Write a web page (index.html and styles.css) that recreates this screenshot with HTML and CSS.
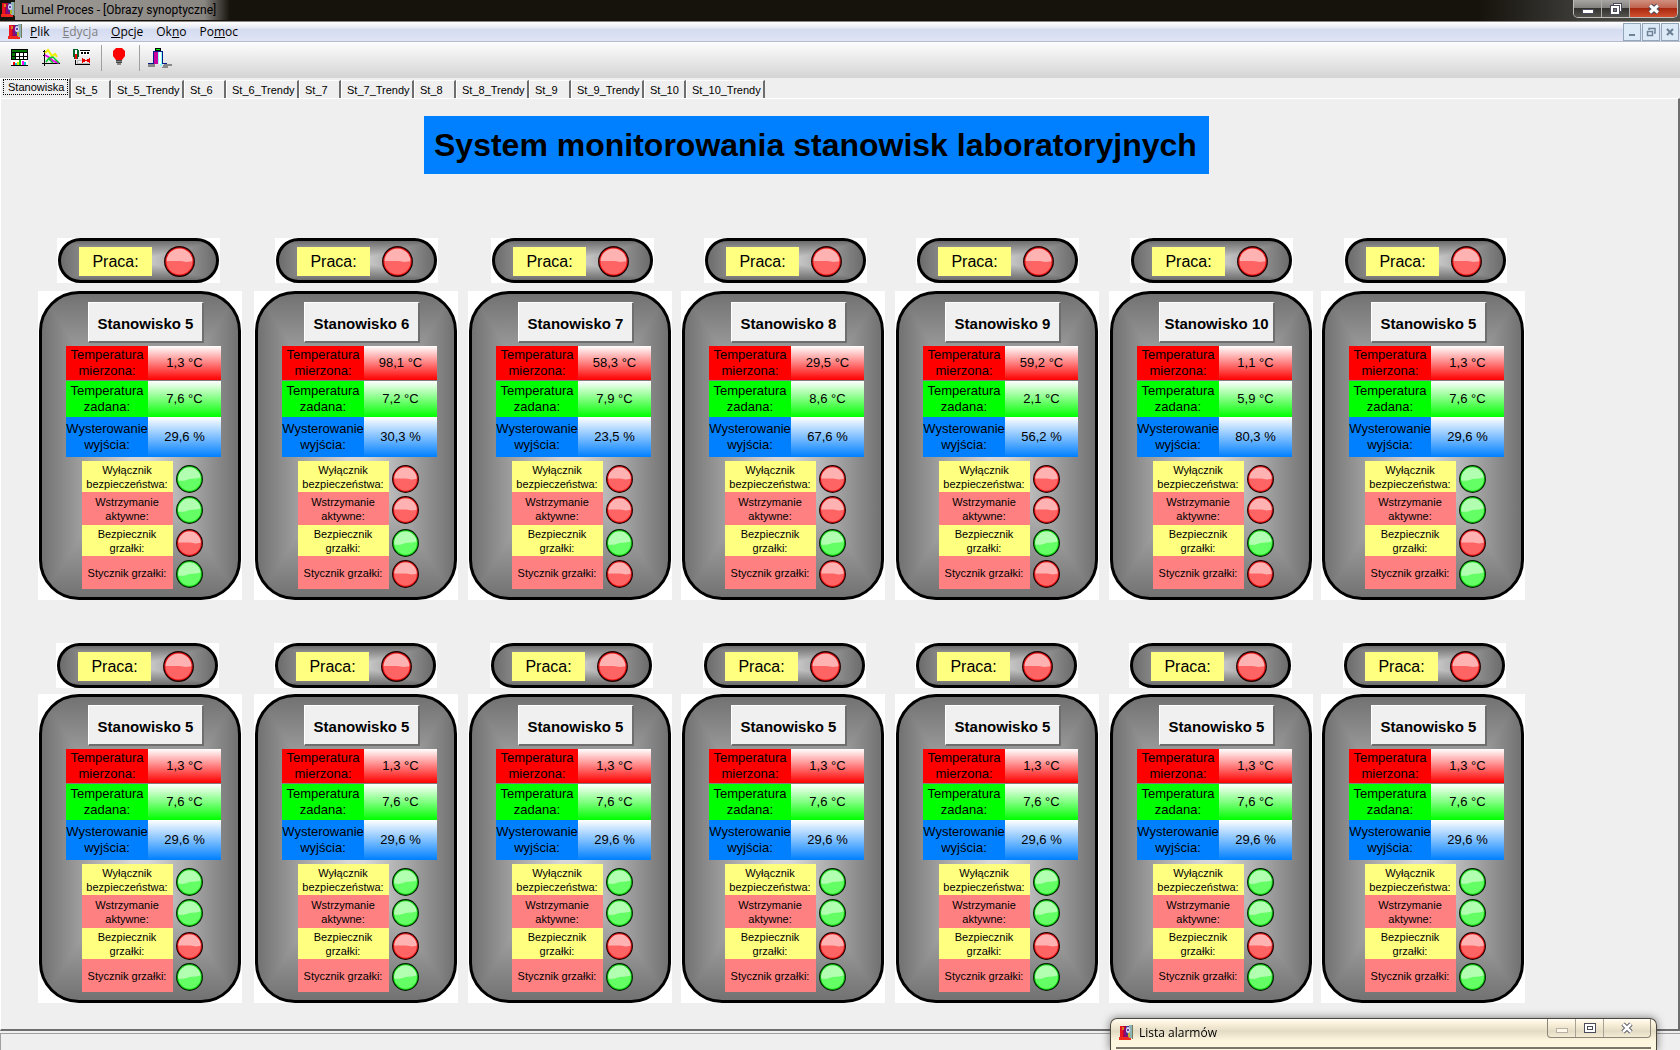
FILE: index.html
```html
<!DOCTYPE html>
<html lang="pl">
<head>
<meta charset="utf-8">
<title>Lumel Proces - [Obrazy synoptyczne]</title>
<link rel="stylesheet" href="styles.css">
</head>
<body>
<svg class="defs" aria-hidden="true">
  <symbol id="app" viewBox="0 0 14 16" preserveAspectRatio="none">
    <path d="M1 1h8v14H1z" fill="#b3003c"/><path d="M1 1h3v14H1z" fill="#e8141e"/><path d="M0 12h12v3H0z" fill="#f0281e"/>
    <path d="M3 2h2v3H3z" fill="#d88020"/><path d="M5 3h5v9H5z" fill="#8c0a78"/><path d="M7 1h5v9H7z" fill="#3c3c96"/>
    <path d="M10 0h3v13h-3z" fill="#8cb4b4"/><path d="M13 0h1v14h-1z" fill="#78785a"/>
    <ellipse cx="9" cy="5" rx="2" ry="3" fill="#dcd2f0"/><ellipse cx="9" cy="5" rx="1" ry="1" fill="#28288c"/><path d="M9 8h2v4H9z" fill="#b4b432"/>
  </symbol>
  <symbol id="lamp-red" viewBox="0 0 30 30" preserveAspectRatio="none">
    <ellipse cx="15" cy="15" rx="14" ry="14" fill="#ff6464"/>
    <path d="M1 14.500A14 14 0 0 1 29 14.500L22 15.500 16 14.500 9 14.500z" fill="#ffb2b2"/>
    <ellipse cx="15" cy="15" rx="13.300" ry="13.300" fill="none" stroke="#f01010" stroke-width="1.300"/>
    <ellipse cx="15" cy="15" rx="14.300" ry="14.300" fill="none" stroke="#200000" stroke-width="1.300"/>
  </symbol>
  <symbol id="lamp-green" viewBox="0 0 30 30" preserveAspectRatio="none">
    <ellipse cx="15" cy="15" rx="14" ry="14" fill="#64ff64"/>
    <path d="M1 17A14 14 0 1 1 29 13L22 14.500 15 15 9 17z" fill="#b2ffb2"/>
    <ellipse cx="15" cy="15" rx="13.300" ry="13.300" fill="none" stroke="#10d810" stroke-width="1.300"/>
    <ellipse cx="15" cy="15" rx="14.300" ry="14.300" fill="none" stroke="#002000" stroke-width="1.300"/>
  </symbol>
</svg>

<header class="titlebar">
  <svg class="app-icon"><use href="#app"/></svg>
  <span class="caption">Lumel Proces - [Obrazy synoptyczne]</span>
  <div class="win-buttons">
    <button type="button" class="win-btn" aria-label="Minimalizuj"><svg width="14" height="14"><rect x="1.500" y="7.500" width="11" height="4" fill="#fff" stroke="#4a4a5a"/></svg></button>
    <button type="button" class="win-btn" aria-label="Przywróć"><svg width="14" height="14"><rect x="4.500" y="1.500" width="8" height="8" fill="#fff" stroke="#4a4a5a"/><rect x="1.500" y="3.500" width="9" height="9" fill="#fff" stroke="#4a4a5a"/><rect x="4.500" y="6.500" width="3" height="3" fill="#777" stroke="#4a4a5a"/></svg></button>
    <button type="button" class="win-btn win-close" aria-label="Zamknij"><svg width="14" height="14"><path d="M3 3.500l8 7M11 3.500l-8 7" stroke="#4a4a5a" stroke-width="5"/><path d="M3 3.500l8 7M11 3.500l-8 7" stroke="#fff" stroke-width="3"/></svg></button>
  </div>
</header>

<nav class="menubar">
  <svg class="app-icon"><use href="#app"/></svg>
  <button type="button" class="menu"><u>P</u>lik</button>
  <button type="button" class="menu" disabled><u>E</u>dycja</button>
  <button type="button" class="menu"><u>O</u>pcje</button>
  <button type="button" class="menu">Ok<u>n</u>o</button>
  <button type="button" class="menu">Po<u>m</u>oc</button>
  <div class="mdi-buttons">
    <button type="button" class="mdi-btn" aria-label="Minimalizuj okno"><svg width="10" height="10"><path d="M2 7h6v2H2z" fill="#6e8296"/></svg></button>
    <button type="button" class="mdi-btn" aria-label="Przywróć okno"><svg width="10" height="10"><path d="M3 3V1.500h6V6H8M1.500 4.500h5v4h-5zM3 1.500h6M1 4.500h6" fill="none" stroke="#6e8296" stroke-width="1.500"/></svg></button>
    <button type="button" class="mdi-btn" aria-label="Zamknij okno"><svg width="10" height="10"><path d="M2 2l6 6M8 2L2 8" stroke="#6e8296" stroke-width="2.200"/></svg></button>
  </div>
</nav>

<div class="toolbar">
  <button type="button" class="tool" aria-label="Tabela"><svg width="20" height="20" shape-rendering="crispEdges">
    <path d="M1 1h17v11H1z"/><path d="M2 2h15v2H2z" fill="#007800"/><path d="M2 5h3v3H2zM2 9h3v2H2z" fill="#007800"/>
    <path d="M6 5h3v3H6zM10 5h3v3h-3zM14 5h3v3h-3zM6 9h3v2H6zM10 9h3v2h-3zM14 9h3v2h-3z" fill="#fff"/>
    <path d="M1 12h17v6H1z" fill="#fff"/><path d="M1 17h17v1H1z"/><path d="M3 14h2v3H3z" fill="#f00"/><path d="M5 15h2v2H5zM14 14h2v3h-2z" fill="#0cc"/><path d="M7 14h2v3H7z" fill="#dd0"/><path d="M9 12h2v5H9z" fill="#0c0"/><path d="M12 13h2v4h-2z" fill="#f0f"/></svg></button>
  <button type="button" class="tool" aria-label="Trendy"><svg width="20" height="20" fill="none">
    <path d="M3.500 2v16M1 15.500h18M2 3.500h3M2 7.500h3" stroke="#000"/><path d="M4 5l3-3 4 6 3-2 2 3" stroke="#ee0" stroke-width="2"/><path d="M4 7l5 3 3 3 6 2" stroke="#e0e" stroke-width="2"/><path d="M5 14l3-4 4-1 6 6M8 11l4 4" stroke="#0c2" stroke-width="1.500"/></svg></button>
  <button type="button" class="tool" aria-label="Synoptyka"><svg width="20" height="20" shape-rendering="crispEdges">
    <path d="M1 1h5v1h1v7H6v2H2V9H1z" fill="#006428"/><path d="M3 2h2v8H3z" fill="#fff"/><path d="M3 6h2v5H3z" fill="#e00"/>
    <path d="M8 3h10v4H8z" fill="#fff"/><path d="M8 2h10v1H8zM9 4h2v2H9zM12 4h2v2h-2zM15 4h2v2h-2zM3 12h1v4H3zM3 16h15v1H3z"/><path d="M5 12h13v4H5z" fill="#bbb"/><path d="M6 13h12v2H6z" fill="#eee"/><path d="M10 10l4 2 4-2v5l-4-2-4 2z" fill="#e00"/></svg></button>
  <span class="tool-sep"></span>
  <button type="button" class="tool" aria-label="Alarmy"><svg width="20" height="20"><path d="M6 0h6l3 3v5l-3 4H6L3 8V3z" fill="#f00"/><path d="M6 12h6v1H6zM6 14h6v1H6z" fill="#444"/><path d="M6 13h6v1H6zM7 15h4v2H7z" fill="#888"/></svg></button>
  <span class="tool-sep"></span>
  <button type="button" class="tool" aria-label="Wyjście"><svg width="24" height="20" shape-rendering="crispEdges">
    <path d="M0 16h7v3H0zM16 16h8v2h-4v2h-6z" fill="#888"/><path d="M0 15h5V3h10v12h4v1h-5V4H6v12H0z" fill="#001e8c"/><path d="M6 4h4v12H6z" fill="#c800a0"/><path d="M10 4h4v14h-2v-3h-2z" fill="#8ff"/><path d="M11 4h2v12h-2z" fill="#fff"/><path d="M7 0h6v3H7z"/><path d="M8 1h4v1H8z" fill="#0e0"/></svg></button>
</div>

<div class="tabs" role="tablist">
  <button type="button" class="tab tab-first" role="tab" aria-selected="true"><span>Stanowiska</span></button>
  <button type="button" class="tab" role="tab">St_5</button>
  <button type="button" class="tab tab-wide" role="tab">St_5_Trendy</button>
  <button type="button" class="tab" role="tab">St_6</button>
  <button type="button" class="tab tab-wide" role="tab">St_6_Trendy</button>
  <button type="button" class="tab" role="tab">St_7</button>
  <button type="button" class="tab tab-wide" role="tab">St_7_Trendy</button>
  <button type="button" class="tab" role="tab">St_8</button>
  <button type="button" class="tab tab-wide" role="tab">St_8_Trendy</button>
  <button type="button" class="tab" role="tab">St_9</button>
  <button type="button" class="tab tab-wide" role="tab">St_9_Trendy</button>
  <button type="button" class="tab" role="tab">St_10</button>
  <button type="button" class="tab tab-last" role="tab">St_10_Trendy</button>
</div>

<main class="canvas">
  <h1 class="heading">System monitorowania stanowisk laboratoryjnych</h1>
  <div class="bank" id="bank-1"></div>
  <div class="bank bank-second" id="bank-2"></div>
</main>
<footer class="statusbar"></footer>

<section class="alarms" aria-label="Lista alarmów">
  <div class="alarms-bar">
    <svg class="app-icon"><use href="#app"/></svg>
    <span class="alarms-title">Lista alarmów</span>
    <div class="alarms-buttons">
      <button type="button" class="al-btn" aria-label="Minimalizuj listę" disabled><svg width="14" height="14"><rect x="1.500" y="7.500" width="11" height="4" fill="#fff8e8" stroke="#b8b0a4"/></svg></button>
      <button type="button" class="al-btn" aria-label="Maksymalizuj listę"><svg width="14" height="14"><rect x="1.500" y="2.500" width="11" height="9" fill="#fff" stroke="#4a4a5a"/><rect x="4.500" y="5.500" width="5" height="3" fill="#fff" stroke="#4a4a5a"/></svg></button>
      <button type="button" class="al-btn al-close" aria-label="Zamknij listę"><svg width="14" height="14"><path d="M3 3l8 8M11 3l-8 8" stroke="#4a4a5a" stroke-width="4.500"/><path d="M3 3l8 8M11 3l-8 8" stroke="#fff" stroke-width="2.500"/></svg></button>
    </div>
  </div>
  <div class="alarms-body"></div>
</section>
<script src="app.js"></script>
</body>
</html>
```
FILE: app.js
```js
// One entry per station: number, measured temp., set temp., output, state of the four lamps (g = green, r = red).
const first = [
  [5, "1,3", "7,6", "29,6", "ggrg"],
  [6, "98,1", "7,2", "30,3", "rrgr"],
  [7, "58,3", "7,9", "23,5", "rrgr"],
  [8, "29,5", "8,6", "67,6", "rrgr"],
  [9, "59,2", "2,1", "56,2", "rrgr"],
  [10, "1,1", "5,9", "80,3", "rrgr"],
  [5, "1,3", "7,6", "29,6", "ggrg"]
];
const second = Array.from({ length: 7 }, () => first[0]);
const signals = ["Wyłącznik bezpieczeństwa:", "Wstrzymanie aktywne:", "Bezpiecznik grzałki:", "Stycznik grzałki:"];

const lamp = (state, cls) => {
  const name = state === "g" ? "green" : "red";
  return `<svg class="lamp ${cls}" role="img" aria-label="${name === "green" ? "zielona" : "czerwona"}"><use href="#lamp-${name}"/></svg>`;
};

const pill = () => `<div class="pill"><div class="pill-body"><span class="pill-label">Praca:</span>${lamp("r", "lamp-big")}</div></div>`;

const panel = ([no, measured, target, output, lamps]) => `
  <section class="panel"><div class="panel-body">
    <button type="button" class="station">Stanowisko ${no}</button>
    <table class="readings">
      <tr class="measured"><th scope="row">Temperatura mierzona:</th><td>${measured} °C</td></tr>
      <tr class="target"><th scope="row">Temperatura zadana:</th><td>${target} °C</td></tr>
      <tr class="output"><th scope="row">Wysterowanie wyjścia:</th><td>${output} %</td></tr>
    </table>
    <ul class="signals">${signals.map((s, i) => `<li><span class="signal">${s}</span>${lamp(lamps[i], "lamp-small")}</li>`).join("")}</ul>
  </div></section>`;

const fill = (id, list) => {
  document.getElementById(id).innerHTML =
    `<div class="pills">${list.map(pill).join("")}</div><div class="panels">${list.map(panel).join("")}</div>`;
};
fill("bank-1", first);
fill("bank-2", second);
```
FILE: styles.css
```css
* { box-sizing: border-box; }
body {
  margin: 0;
  min-height: 100vh;
  display: flex;
  flex-direction: column;
  background: #efefef;
  color: #000;
  font-family: "Liberation Sans", Arial, sans-serif;
  font-size: 13px;
}
button {
  margin: 0;
  padding: 0;
  border: 0;
  background: none;
  color: inherit;
  font: inherit;
}
svg { display: block; flex: none; }
.defs { position: absolute; width: 0; height: 0; }
.app-icon { width: 14px; height: 16px; }

/* Window caption */
.titlebar {
  display: flex;
  align-items: center;
  height: 22px;
  padding: 0 2px 1px 1px;
  background: linear-gradient(to right, #16120c 0, #16120c 88%, #3c3c38 94%, #55534e 100%);
  border-bottom: 1px solid #8a8480;
}
.caption {
  padding: 0 14px 0 6px;
  font: 12px/20px Roboto, "Open Sans", sans-serif;
  background: linear-gradient(to right, #a09c98 0, #8a8682 88%, #16120c 100%);
}
.win-buttons {
  display: flex;
  align-self: flex-start;
  height: 18px;
  margin-left: auto;
  border: 1px solid #c0beba;
  border-top: 0;
  border-radius: 0 0 5px 5px;
  overflow: hidden;
}
.win-btn {
  display: flex;
  align-items: center;
  justify-content: center;
  width: 28px;
  background: linear-gradient(#a8a6a4 0, #84827e 45%, #33312e 50%, #55534e 100%);
  border-right: 1px solid #b0aeaa;
}
.win-close {
  width: 47px;
  border: 0;
  background: linear-gradient(#d09080 0, #c06450 45%, #a82810 50%, #d05030 100%);
}

/* Menu bar */
.menubar {
  display: flex;
  align-items: center;
  gap: 13px;
  height: 20px;
  padding: 0 1px 0 8px;
  background: linear-gradient(#fff 0, #e6eaf4 30%, #d6dcf0 40%, #dfe5f5 100%);
  border-bottom: 1px solid #b6bccc;
}
.menubar .app-icon { margin-right: -5px; }
.menu { font: 12px/18px "Open Sans", "Noto Sans", sans-serif; }
.menu:disabled { color: #808080; }
.mdi-buttons { display: flex; gap: 1px; margin-left: auto; }
.mdi-btn {
  display: flex;
  align-items: center;
  justify-content: center;
  width: 18px;
  height: 18px;
  background: #dceaf8;
  border: 1px solid #93a5b8;
}

/* Toolbar */
.toolbar {
  display: flex;
  align-items: center;
  height: 36px;
  padding: 0 10px 4px;
  gap: 11px;
  background: linear-gradient(#fdfdfd, #d4d4d4);
}
.tool-sep { width: 1px; height: 26px; margin: 0 -3px 0 -2px; background: #a0a0a0; }

/* Sheet tabs */
.tabs {
  display: flex;
  align-items: flex-end;
  height: 20px;
  font-size: 11px;
}
.tab {
  width: 42px;
  height: 18px;
  padding-left: 5px;
  text-align: left;
  border-top: 1px solid #fff;
  border-left: 1px solid #fff;
  border-right: 2px solid #6e6e6e;
}
.tab-wide { width: 73px; }
.tab-last { width: 79px; }
.tab-first { width: 71px; height: 20px; padding: 0 1px 3px 2px; }
.tab-first + .tab { width: 40px; padding-left: 3px; }
.tab-first span { display: block; padding: 0 4px; border: 1px dotted #000; line-height: 14px; }

/* Synoptic screen */
.canvas {
  flex: 1;
  border: 1px solid #fff;
  border-right: 2px solid #6e6e6e;
  border-bottom: 2px solid #6e6e6e;
  padding: 17px 0 26px;
}
.heading {
  width: max-content;
  margin: 0 0 64px 423px;
  padding: 0 12px 0 10px;
  background: #0080ff;
  font-size: 32px;
  line-height: 58px;
  font-weight: bold;
}
.bank { padding-left: 37px; }
.bank-second { padding-top: 43px; }
.pills {
  display: grid;
  grid-template-columns: 218px 216px 213px 212px 214px 214px 163px;
  margin: 0 0 8px 19px;
}
.bank-second .pills { margin: 0 0 6px 18px; }
.panels {
  display: grid;
  grid-template-columns: 216px 214px 213px 214px 214px 212px 204px;
}
.pill { width: 163px; height: 45px; background: #fff; }
.pill-body {
  display: flex;
  align-items: center;
  gap: 12px;
  height: 45px;
  margin: 0 1px;
  padding: 1px 0 0 18px;
  border: 3px solid #000;
  border-radius: 23px;
  background: linear-gradient(to right, #6c6c6c, #d8d8d8, #6c6c6c), linear-gradient(#6c6c6c, #d8d8d8, #6c6c6c);
  background-blend-mode: darken;
}
.pill-label {
  width: 73px;
  background: #ffff80;
  font-size: 16px;
  line-height: 29px;
  text-align: center;
}
.lamp-big { width: 31px; height: 31px; }
.panel { width: 204px; background: #fff; }
.panel-body {
  height: 309px;
  margin: 0 1px;
  padding: 8px 0 0 24px;
  border: 3px solid #000;
  border-radius: 40px;
  background: linear-gradient(to right, #727272, #e0e0e0, #727272), linear-gradient(#727272, #e0e0e0, #727272);
  background-blend-mode: darken;
}
.station {
  display: block;
  width: 116px;
  height: 41px;
  margin: 0 0 3px 22px;
  padding-top: 2px;
  background: #f0f0f0;
  border: 1px solid #fff;
  border-right: 2px solid #6e6e6e;
  border-bottom: 2px solid #6e6e6e;
  font-size: 15px;
  font-weight: bold;
}

/* Readings */
.readings {
  width: 155px;
  table-layout: fixed;
  border-spacing: 0;
  line-height: 16px;
  text-align: center;
}
.readings th { width: 82px; padding: 0; font-weight: normal; }
.readings td { padding: 0; }
.measured { height: 35px; }
.measured th { background: #f00; border-bottom: 1px solid #808080; }
.measured td { padding-bottom: 1px; background: linear-gradient(#fff, #f00); border-bottom: 1px solid #808080; }
.target { height: 36px; }
.target th { background: #0f0; }
.target td { background: linear-gradient(#fff, #0f0); }
.output { height: 40px; }
.output th { background: #0080ff; }
.output td { background: linear-gradient(#fff, #0080ff); }

/* Signals */
.signals {
  margin: 4px 0 0 16px;
  padding: 0;
  list-style: none;
  font-size: 11px;
  line-height: 14px;
}
.signals li { display: flex; gap: 3px; height: 31px; }
.signals li:nth-child(even) { height: 33px; }
.signal {
  display: flex;
  align-items: center;
  justify-content: center;
  width: 91px;
  padding-right: 1px;
  background: #ffff80;
  text-align: center;
}
.signals li:nth-child(even) .signal { background: #ff8080; }
.lamp-small { width: 27px; height: 28px; margin-top: 4px; }

.statusbar {
  height: 18px;
  margin-top: 2px;
  border-top: 1px solid #a0a0a0;
  border-left: 1px solid #a0a0a0;
}

/* Alarm list window lying over the lower edge */
.alarms {
  position: fixed;
  right: 23px;
  bottom: 0;
  width: 547px;
  height: 32px;
  padding: 0 5px;
  border: 1px solid #4a463c;
  border-bottom: 0;
  border-radius: 7px 7px 0 0;
  background: linear-gradient(#fffdf6 0, #fbf1da 15%, #e4dbc4 40%, #fff6e0 70%);
  box-shadow: 0 0 8px rgba(0, 0, 0, 0.5);
}
.alarms-bar { display: flex; align-items: center; height: 28px; padding-left: 3px; }
.alarms-title { padding-left: 6px; font: 12px/20px "Open Sans", "Noto Sans", sans-serif; }
.alarms-buttons {
  display: flex;
  align-self: flex-start;
  height: 19px;
  margin-left: auto;
  border: 1px solid #8c8678;
  border-top: 0;
  border-radius: 0 0 4px 4px;
}
.al-btn {
  display: flex;
  align-items: center;
  justify-content: center;
  width: 28px;
  border-right: 1px solid #a8a294;
}
.al-close { width: 46px; border: 0; }
.alarms-body { height: 2px; background: #7a766a; }
```
